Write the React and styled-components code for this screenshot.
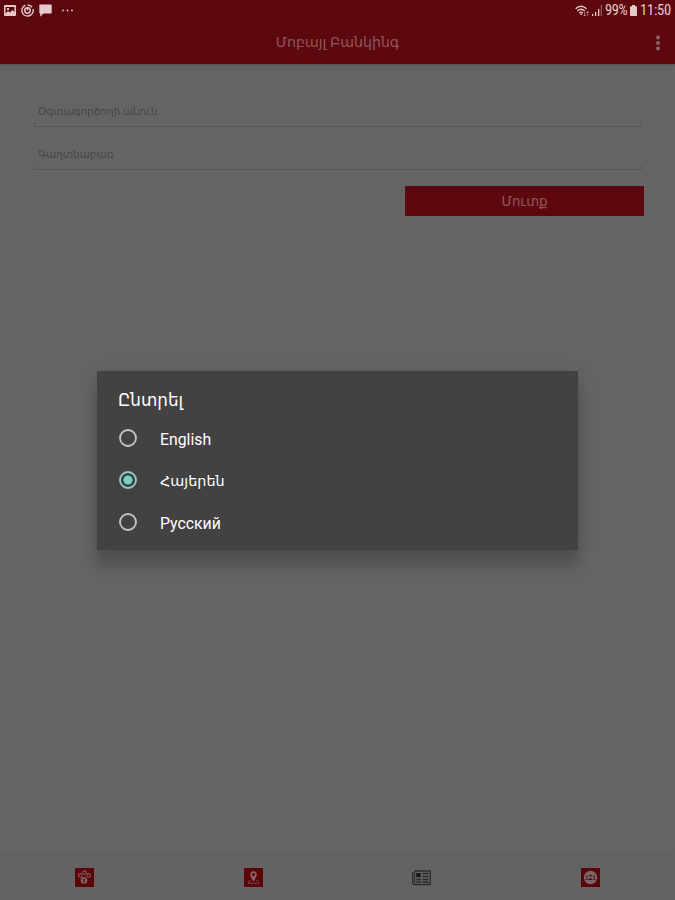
import React from 'react'
import styled, { createGlobalStyle } from 'styled-components'

const GlobalStyle = createGlobalStyle`
  * {
    box-sizing: border-box;
  }

  body {
    margin: 0;
    overflow: hidden;
    font-family: Roboto, "Noto Sans", "DejaVu Sans", sans-serif;
  }
`

const Screen = styled.div`
  position: relative;
  display: flex;
  flex-direction: column;
  width: 675px;
  height: 900px;
  background: #646464;
`

const Header = styled.header`
  height: 64px;
  background: #5d080e;
  box-shadow: 0 1px 2px rgba(0, 0, 0, 0.2);
`

const StatusBar = styled.div`
  display: flex;
  align-items: center;
  justify-content: space-between;
  height: 21px;
  padding: 0 5px 0 4px;
  color: #e6c9cb;
`

const StatusGroup = styled.div`
  display: flex;
  align-items: center;
  gap: ${props => props.$gap}px;
`

const StatusText = styled.span`
  width: ${props => props.$width}px;
  font-size: 14.5px;
  font-stretch: 75%;
  line-height: 21px;
  letter-spacing: ${props => props.$spacing || 0}px;
  white-space: nowrap;
`

const Toolbar = styled.div`
  display: grid;
  grid-template-columns: 34px 1fr 34px;
  align-items: center;
  height: 43px;
`

const Title = styled.h1`
  grid-column: 2;
  margin: 0;
  padding-bottom: 2px;
  color: #91575b;
  font-size: 14.15px;
  font-weight: 400;
  line-height: 20px;
  text-align: center;
  white-space: nowrap;
`

const MenuButton = styled.button`
  display: flex;
  justify-content: center;
  padding: 0;
  border: 0;
  background: none;
  color: #8c6466;
`

const Form = styled.form`
  display: flex;
  flex: 1;
  flex-direction: column;
  padding: 34px 31px 0 34px;
`

const Field = styled.label`
  display: flex;
  align-items: center;
  height: 29px;
  margin: 0 3px 14px 0;
  padding: 0 4px 2px;
  background:
    linear-gradient(#555, #555) left bottom / 1px 4px no-repeat,
    linear-gradient(#555, #555) right bottom / 1px 4px no-repeat,
    linear-gradient(#555, #555) left bottom / 100% 1px no-repeat;
  color: #474747;
  font-size: 10.5px;
  line-height: 16px;
`

const LoginButton = styled.button`
  align-self: flex-end;
  width: 239px;
  height: 30px;
  margin-top: 2px;
  padding: 1px 0 0;
  border: 0;
  background: #5d080e;
  color: #91575b;
  font-family: inherit;
  font-size: 13.3px;
  line-height: 29px;
`

const TabBar = styled.nav`
  display: grid;
  grid-template-columns: repeat(4, 1fr);
  align-items: center;
  justify-items: center;
  height: 45px;
  background: #636363;
  box-shadow: 0 -1px 3px rgba(0, 0, 0, 0.06);
`

const Dialog = styled.section`
  position: absolute;
  top: 371px;
  left: 97px;
  width: 481px;
  height: 179px;
  padding: 18px 21px 0;
  border-radius: 1px;
  background: #424242;
  box-shadow: 0 18px 12px rgba(0, 0, 0, 0.15), 0 4px 18px rgba(0, 0, 0, 0.13);
  color: #fff;
`

const DialogTitle = styled.h2`
  height: 22px;
  margin: 0 0 6px;
  font-size: 16.8px;
  font-weight: 400;
  line-height: 22px;
`

const Option = styled.div`
  display: flex;
  align-items: center;
  gap: 22px;
  height: 42px;
`

const OptionName = styled.span`
  padding-top: 3px;
  font-size: ${props => props.$size}px;
  line-height: 20px;
`

const PhotoIcon = () => (
  <svg width='12' height='11' viewBox='0 0 12 11'>
    <path
      fill='currentColor'
      fillRule='evenodd'
      d='M1 0h10a1 1 0 0 1 1 1v9a1 1 0 0 1-1 1H1a1 1 0 0 1-1-1V1a1 1 0 0 1 1-1zm.5 2v6.5L4 6l2 1.5L8.5 5l2 2V2zM3 3h2v2H3z'
    />
  </svg>
)

const SyncIcon = () => (
  <svg width='13' height='13' viewBox='0 0 13 13' fill='none' stroke='currentColor'>
    <path strokeWidth='1.5' d='M4.2 1.3A5.6 5.6 0 1 0 12 5M6.5.9a5.6 5.6 0 0 1 4.6 2.4' />
    <circle cx='6.5' cy='6.5' r='2.7' strokeWidth='1.5' />
    <path strokeWidth='1.3' d='M6.5 3v3.5' />
  </svg>
)

const MessageIcon = () => (
  <svg width='13' height='13' viewBox='0 0 13 13'>
    <path fill='currentColor' d='M1 .5h11a.7.7 0 0 1 .7.7v7.6a.7.7 0 0 1-.7.7H4.5L1.2 12.8V9.5H1a.7.7 0 0 1-.7-.7V1.2A.7.7 0 0 1 1 .5z' />
  </svg>
)

const DotsIcon = () => (
  <svg width='12' height='3' viewBox='0 0 12 3' fill='currentColor'>
    <circle cx='1' cy='1.5' r='.9' />
    <circle cx='5.5' cy='1.5' r='.9' />
    <circle cx='10' cy='1.5' r='.9' />
  </svg>
)

const WifiIcon = () => (
  <svg width='14' height='12' viewBox='0 0 14 12' fill='none' stroke='currentColor' strokeWidth='1.3'>
    <path d='M.6 3.7Q6 -1.3 11.6 3.7M2.4 6Q6 2.6 9.8 6M4.2 8Q6 6.3 7.8 8' />
    <circle cx='6.2' cy='9.2' r='.9' fill='currentColor' stroke='none' />
    <path strokeWidth='.9' d='M9.7 7v4M8.5 9.8l1.2 1.3 1.2-1.3M12.6 10.5V6.5M11.4 7.7l1.2-1.2 1.2 1.2' opacity='.65' />
  </svg>
)

const SignalIcon = () => (
  <svg width='10' height='11' viewBox='0 0 10 11' fill='currentColor'>
    <path d='M0 9h1.3v2H0zM3 7h1.3v4H3zM6 4h1.3v7H6z' />
    <path opacity='.4' d='M8.7 0H10v11H8.7z' />
  </svg>
)

const BatteryIcon = () => (
  <svg width='7' height='11' viewBox='0 0 7 11'>
    <path fill='currentColor' d='M2 0h3v1.3h1.2a.8.8 0 0 1 .8.8v8.1a.8.8 0 0 1-.8.8H.8a.8.8 0 0 1-.8-.8V2.1a.8.8 0 0 1 .8-.8H2z' />
  </svg>
)

const MoreIcon = () => (
  <svg width='6' height='16' viewBox='0 0 6 16' fill='currentColor'>
    <circle cx='3' cy='2.6' r='2' />
    <circle cx='3' cy='8' r='2' />
    <circle cx='3' cy='13.4' r='2' />
  </svg>
)

const RadioIcon = ({ checked }) => (
  <svg width='20' height='20' viewBox='0 0 20 20'>
    <circle cx='10' cy='10' r='8' fill={checked ? '#254b48' : 'none'} stroke={checked ? '#9dcbc6' : '#c6c6c6'} strokeWidth='1.8' />
    {checked && <circle cx='10' cy='10' r='4.6' fill='#80cbc4' />}
  </svg>
)

const RatesIcon = () => (
  <svg width='19' height='19' viewBox='0 0 19 19'>
    <path fill='#5b0508' d='M0 0h19v19H0z' />
    <g fill='#5b0508' stroke='#80595b' strokeWidth='1.2'>
      <circle cx='5.3' cy='7.4' r='1.8' />
      <circle cx='9.5' cy='4.6' r='1.8' />
      <circle cx='13.6' cy='7.4' r='1.8' />
    </g>
    <circle cx='9' cy='12.4' r='3.3' fill='#806869' />
    <path fill='none' stroke='#5b0508' d='M10.4 11H8.6q-1 .8 0 1.4h.9q1 .8 0 1.5H7.8' />
  </svg>
)

const MapIcon = () => (
  <svg width='19' height='19' viewBox='0 0 19 19'>
    <path fill='#5b0508' d='M0 0h19v19H0z' />
    <path fill='none' stroke='#7c4548' d='M6.5 12.5H5.3L4 15.2h11l-1.3-2.7h-1.2' />
    <path
      fill='#866466'
      fillRule='evenodd'
      d='M9.5 3.3a3.3 3.3 0 0 1 3.3 3.3c0 2.4-3.3 7-3.3 7s-3.3-4.6-3.3-7a3.3 3.3 0 0 1 3.3-3.3zm0 1.8a1.5 1.5 0 1 0 0 3 1.5 1.5 0 0 0 0-3z'
    />
  </svg>
)

const NewsIcon = () => (
  <svg width='19' height='16' viewBox='0 0 19 16' fill='none' stroke='#2b2b2b'>
    <path strokeWidth='1.3' d='M2.7 1h15.5v13.5H2.3Q.7 14.2.7 12.8V3.2h2' />
    <path d='M2.7 1v12' />
    <path fill='#1c1c1c' stroke='none' d='M4.2 3h4.6v4.2H4.2z' />
    <path strokeWidth='1.3' d='M10.5 3.5h6M10.5 6.5h6M4.2 9.5h5M10.5 9.5h6M4.2 12h5M10.5 12h6' />
  </svg>
)

const CommunityIcon = () => (
  <svg width='19' height='19' viewBox='0 0 19 19'>
    <path fill='#5b0508' d='M0 0h19v19H0z' />
    <circle cx='9.5' cy='9.5' r='6.7' fill='#7b6566' />
    <g fill='#4e1517'>
      <circle cx='5.8' cy='8.5' r='1' />
      <circle cx='9.5' cy='7.6' r='1.2' />
      <circle cx='13.2' cy='8.5' r='1' />
      <path d='M4 11.8q1.8-2.5 3.4 0zM7.3 12q2.2-4 4.4 0zM11.6 11.8q1.6-2.5 3.4 0z' />
    </g>
  </svg>
)

const languages = [
  { id: 'en', name: 'English', size: 15.8 },
  { id: 'hy', name: 'Հայերեն', size: 14.4 },
  { id: 'ru', name: 'Русский', size: 15.8 }
]

const App = () => (
  <Screen>
    <GlobalStyle />
    <Header>
      <StatusBar>
        <StatusGroup $gap={5}>
          <PhotoIcon />
          <SyncIcon />
          <MessageIcon />
          <span />
          <DotsIcon />
        </StatusGroup>
        <StatusGroup $gap={3}>
          <WifiIcon />
          <SignalIcon />
          <StatusText $width={22} $spacing={-0.4}>99%</StatusText>
          <BatteryIcon />
          <StatusText $width={30} $spacing={-0.2}>11:50</StatusText>
        </StatusGroup>
      </StatusBar>
      <Toolbar>
        <Title>Մոբայլ Բանկինգ</Title>
        <MenuButton type='button'><MoreIcon /></MenuButton>
      </Toolbar>
    </Header>
    <Form>
      <Field>Օգտագործողի անուն</Field>
      <Field>Գաղտնաբառ</Field>
      <LoginButton type='button'>Մուտք</LoginButton>
    </Form>
    <TabBar>
      <RatesIcon />
      <MapIcon />
      <NewsIcon />
      <CommunityIcon />
    </TabBar>
    <Dialog role='dialog'>
      <DialogTitle>Ընտրել</DialogTitle>
      {languages.map(({ id, name, size }) => (
        <Option key={id} role='radio' aria-checked={id === 'hy'}>
          <RadioIcon checked={id === 'hy'} />
          <OptionName $size={size}>{name}</OptionName>
        </Option>
      ))}
    </Dialog>
  </Screen>
)

export default App
